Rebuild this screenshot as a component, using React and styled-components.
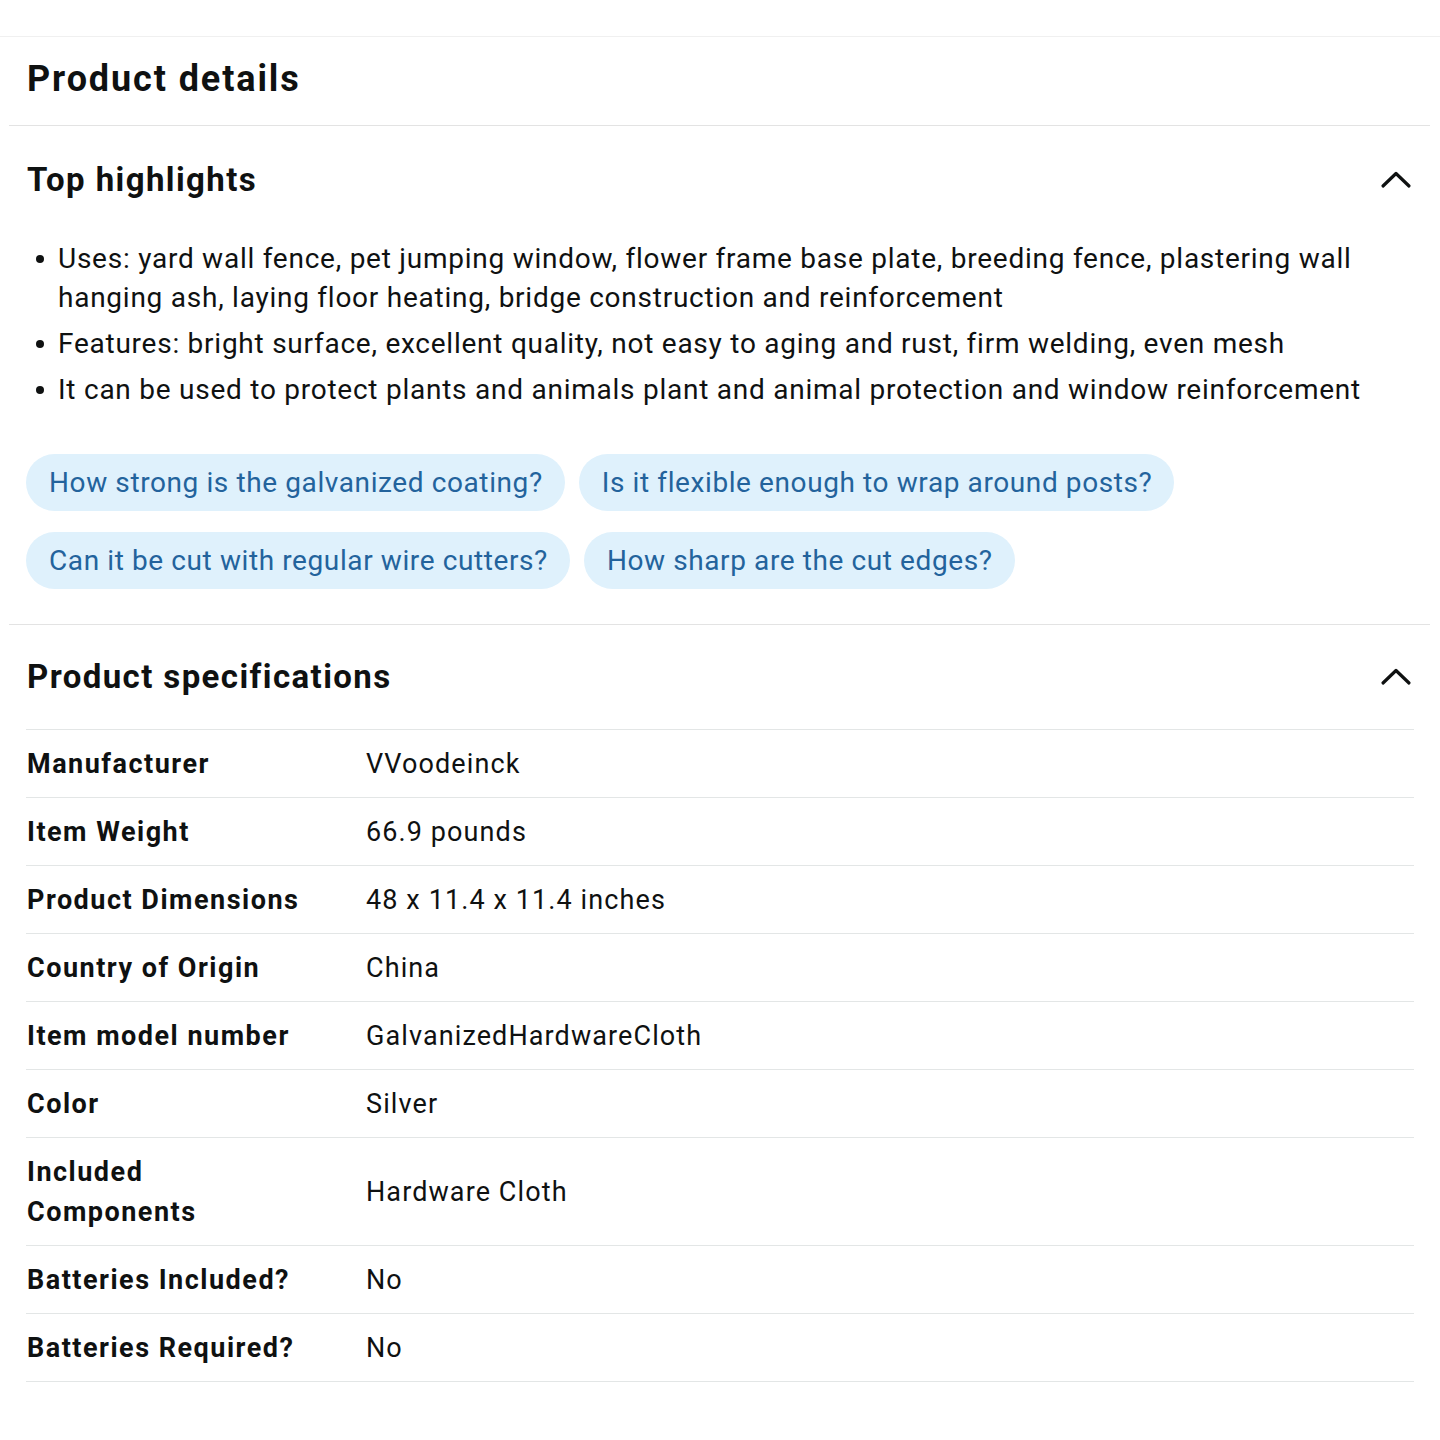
import React from "react";
import styled, { createGlobalStyle } from "styled-components";

const GlobalStyle = createGlobalStyle`
  html, body { margin: 0; padding: 0; background: #ffffff; }
  body {
    font-family: Roboto, "Noto Sans", "Liberation Sans", sans-serif;
    color: #0f1111;
    -webkit-font-smoothing: antialiased;
  }
  * { box-sizing: border-box; }
`;

const Page = styled.div`
  padding-top: 36px;
  width: 1440px;
`;

const TopRule = styled.div`
  border-top: 1px solid #f0f0f0;
`;

const PageTitle = styled.h1`
  margin: 0;
  padding: 0 27px 4px 27px;
  height: 88px;
  display: flex;
  align-items: center;
  font-size: 36px;
  font-weight: 700;
  line-height: 40px;
  letter-spacing: 1.9px;
`;

const Divider = styled.hr`
  margin: 0 10px 0 9px;
  border: 0;
  border-top: 1px solid #e3e3e3;
  height: 0;
`;

const Section = styled.section`
  padding: 0 26px 0 27px;
`;

const SectionHeader = styled.div`
  display: flex;
  align-items: center;
  justify-content: space-between;
  padding-top: ${(p) => p.$top}px;
  padding-bottom: 4px;
  height: ${(p) => p.$top + 40}px;
`;

const SectionTitle = styled.h2`
  margin: 0;
  font-size: 33px;
  font-weight: 700;
  line-height: 40px;
  letter-spacing: 1.4px;
`;

const Chevron = styled.svg`
  width: 32px;
  height: 20px;
  margin-right: 2px;
  display: block;
`;

const BulletList = styled.ul`
  margin: 37px 0 0 0;
  padding: 0 0 0 31px;
  list-style: none;
`;

const Bullet = styled.li`
  position: relative;
  font-size: 28px;
  line-height: 39px;
  letter-spacing: 0.75px;
  margin-bottom: 7px;
  &:last-child { margin-bottom: 0; }
  &::before {
    content: "";
    position: absolute;
    left: -22px;
    top: 16px;
    width: 8px;
    height: 8px;
    border-radius: 50%;
    background: #0f1111;
  }
`;

const Chips = styled.div`
  display: flex;
  flex-wrap: wrap;
  column-gap: 14px;
  row-gap: 21px;
  margin: 45px 0 35px -1px;
`;

const Chip = styled.button`
  height: 57px;
  padding: 0 22px 0 23px;
  border: 0;
  border-radius: 29px;
  background: #dff1fc;
  color: #23639c;
  font-family: inherit;
  font-size: 28px;
  letter-spacing: 0.6px;
  line-height: 57px;
  cursor: pointer;
`;

const SpecTable = styled.div`
  margin-top: 30px;
  margin-left: -1px;
  border-top: 1px solid #e3e6e6;
  width: 1388px;
`;

const SpecRow = styled.div`
  display: grid;
  grid-template-columns: 339px 1fr;
  align-items: center;
  padding: 14px 0 13px 1px;
  border-bottom: 1px solid #e3e6e6;
  font-size: 27px;
  line-height: 40px;
`;

const SpecLabel = styled.div`
  font-weight: 700;
  letter-spacing: 1.5px;
  padding-right: 52px;
`;

const SpecValue = styled.div`
  font-weight: 400;
  letter-spacing: 1.1px;
`;

const BottomSpace = styled.div`
  height: 60px;
`;

const ChevronUp = () => (
  <Chevron viewBox="0 0 32 20" fill="none">
    <polyline
      points="3,16 16,3.5 29,16"
      stroke="#0f1111"
      strokeWidth="3.2"
      strokeLinecap="round"
      strokeLinejoin="round"
    />
  </Chevron>
);

const highlights = [
  "Uses: yard wall fence, pet jumping window, flower frame base plate, breeding fence, plastering wall hanging ash, laying floor heating, bridge construction and reinforcement",
  "Features: bright surface, excellent quality, not easy to aging and rust, firm welding, even mesh",
  "It can be used to protect plants and animals plant and animal protection and window reinforcement",
];

const questions = [
  "How strong is the galvanized coating?",
  "Is it flexible enough to wrap around posts?",
  "Can it be cut with regular wire cutters?",
  "How sharp are the cut edges?",
];

const specs = [
  ["Manufacturer", "VVoodeinck"],
  ["Item Weight", "66.9 pounds"],
  ["Product Dimensions", "48 x 11.4 x 11.4 inches"],
  ["Country of Origin", "China"],
  ["Item model number", "GalvanizedHardwareCloth"],
  ["Color", "Silver"],
  ["Included Components", "Hardware Cloth"],
  ["Batteries Included?", "No"],
  ["Batteries Required?", "No"],
];

export default function App() {
  return (
    <>
      <GlobalStyle />
      <Page>
        <TopRule />
        <PageTitle>Product details</PageTitle>
        <Divider />
        <Section>
          <SectionHeader $top={36}>
            <SectionTitle>Top highlights</SectionTitle>
            <ChevronUp />
          </SectionHeader>
          <BulletList>
            {highlights.map((h) => (
              <Bullet key={h}>{h}</Bullet>
            ))}
          </BulletList>
          <Chips>
            {questions.map((q) => (
              <Chip key={q}>{q}</Chip>
            ))}
          </Chips>
        </Section>
        <Divider />
        <Section>
          <SectionHeader $top={34}>
            <SectionTitle>Product specifications</SectionTitle>
            <ChevronUp />
          </SectionHeader>
          <SpecTable>
            {specs.map(([k, v]) => (
              <SpecRow key={k}>
                <SpecLabel>{k}</SpecLabel>
                <SpecValue>{v}</SpecValue>
              </SpecRow>
            ))}
          </SpecTable>
        </Section>
        <BottomSpace />
      </Page>
    </>
  );
}
